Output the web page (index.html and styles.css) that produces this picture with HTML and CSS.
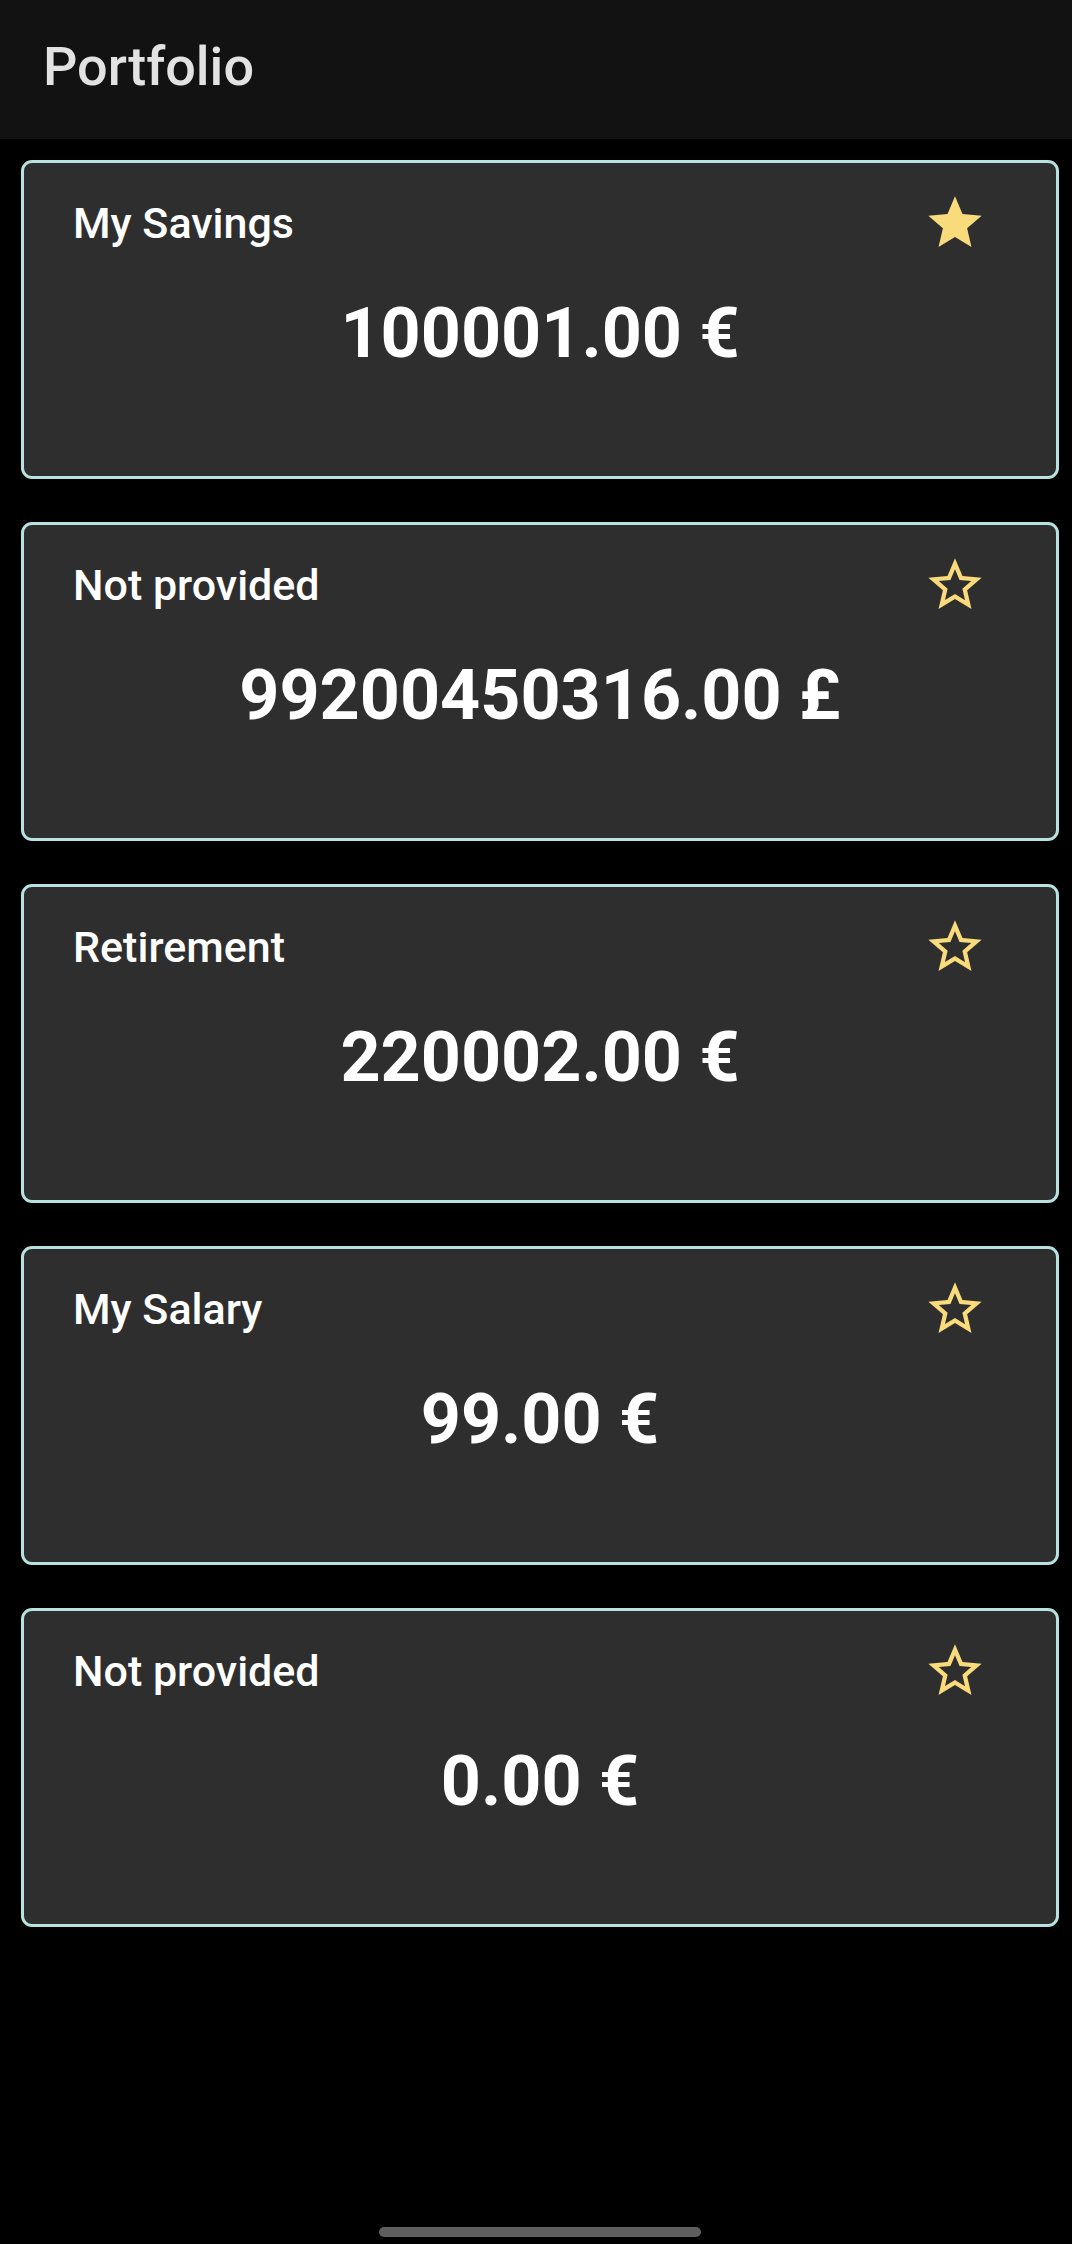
FILE: index.html
```html
<!DOCTYPE html>
<html lang="en">
<head>
<meta charset="utf-8">
<title>Portfolio</title>
<link rel="stylesheet" href="styles.css">
</head>
<body>
<header class="appbar">
  <h1 class="appbar-title">Portfolio</h1>
</header>
<main class="list">
  <section class="card">
    <div class="card-head">
      <span class="card-title">My Savings</span>
      <svg class="star" viewBox="0 0 24 24"><path d="M12 17.27L18.18 21l-1.64-7.03L22 9.24l-7.19-.61L12 2 9.19 8.63 2 9.24l5.46 4.73L5.82 21z"/></svg>
    </div>
    <div class="card-amount">100001.00 €</div>
  </section>
  <section class="card">
    <div class="card-head">
      <span class="card-title">Not provided</span>
      <svg class="star" viewBox="0 0 24 24"><path d="M22 9.24l-7.19-.62L12 2 9.19 8.63 2 9.24l5.46 4.73L5.82 21 12 17.27 18.18 21l-1.63-7.03L22 9.24zM12 15.4l-3.76 2.27 1-4.28-3.32-2.88 4.38-.38L12 6.1l1.71 4.04 4.38.38-3.32 2.88 1 4.28L12 15.4z"/></svg>
    </div>
    <div class="card-amount">99200450316.00 £</div>
  </section>
  <section class="card">
    <div class="card-head">
      <span class="card-title">Retirement</span>
      <svg class="star" viewBox="0 0 24 24"><path d="M22 9.24l-7.19-.62L12 2 9.19 8.63 2 9.24l5.46 4.73L5.82 21 12 17.27 18.18 21l-1.63-7.03L22 9.24zM12 15.4l-3.76 2.27 1-4.28-3.32-2.88 4.38-.38L12 6.1l1.71 4.04 4.38.38-3.32 2.88 1 4.28L12 15.4z"/></svg>
    </div>
    <div class="card-amount">220002.00 €</div>
  </section>
  <section class="card">
    <div class="card-head">
      <span class="card-title">My Salary</span>
      <svg class="star" viewBox="0 0 24 24"><path d="M22 9.24l-7.19-.62L12 2 9.19 8.63 2 9.24l5.46 4.73L5.82 21 12 17.27 18.18 21l-1.63-7.03L22 9.24zM12 15.4l-3.76 2.27 1-4.28-3.32-2.88 4.38-.38L12 6.1l1.71 4.04 4.38.38-3.32 2.88 1 4.28L12 15.4z"/></svg>
    </div>
    <div class="card-amount">99.00 €</div>
  </section>
  <section class="card">
    <div class="card-head">
      <span class="card-title">Not provided</span>
      <svg class="star" viewBox="0 0 24 24"><path d="M22 9.24l-7.19-.62L12 2 9.19 8.63 2 9.24l5.46 4.73L5.82 21 12 17.27 18.18 21l-1.63-7.03L22 9.24zM12 15.4l-3.76 2.27 1-4.28-3.32-2.88 4.38-.38L12 6.1l1.71 4.04 4.38.38-3.32 2.88 1 4.28L12 15.4z"/></svg>
    </div>
    <div class="card-amount">0.00 €</div>
  </section>
</main>
<div class="home-indicator"></div>
</body>
</html>
```
FILE: styles.css
```css
html, body {
  margin: 0;
  padding: 0;
  background: #000;
  font-family: Roboto, "Noto Sans", "Liberation Sans", sans-serif;
  color: #fff;
}
body {
  min-height: 2244px;
  position: relative;
}
.appbar {
  height: 139px;
  box-sizing: border-box;
  background: #121212;
  padding: 35px 0 0 43px;
}
.appbar-title {
  margin: 0;
  font-size: 54px;
  line-height: 64px;
  font-weight: 500;
  color: #e2e2e2;
}
.list {
  display: flex;
  flex-direction: column;
  gap: 43px;
  padding: 21px 13px 0 21px;
}
.card {
  height: 319px;
  box-sizing: border-box;
  background: #2e2e2e;
  border: 3px solid #b6e2df;
  border-radius: 11px;
  padding-top: 28px;
}
.card-head {
  display: flex;
  align-items: center;
  justify-content: space-between;
  padding: 0 69px 0 49px;
  height: 64px;
}
.card-title {
  font-size: 43px;
  line-height: 52px;
  font-weight: 500;
  color: #fff;
}
.star {
  width: 64px;
  height: 64px;
  fill: #f9db7c;
  flex: none;
}
.card-amount {
  margin-top: 37px;
  text-align: center;
  font-size: 70px;
  line-height: 82px;
  font-weight: 700;
  color: #fff;
}
.home-indicator {
  position: absolute;
  left: 379px;
  bottom: 7px;
  width: 322px;
  height: 10px;
  border-radius: 5px;
  background: #5e5e5e;
}
```
